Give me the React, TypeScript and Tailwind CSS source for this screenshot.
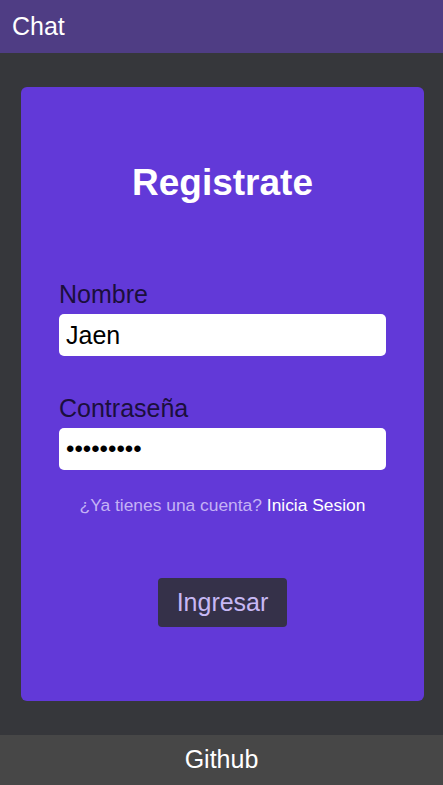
import { FC } from "react";

const App: FC = () => {
	return (
		<div className="flex flex-col min-h-[785px] bg-[#36373b] font-['Liberation_Sans',Arial,sans-serif]">
			<header className="h-[53px] bg-[#4f3d84] flex items-center px-3">
				<h2 className="text-white text-[25px] leading-none">Chat</h2>
			</header>

			<main className="flex-1 pl-[21px] pr-[19px] pt-[34px] pb-[34px]">
				<form
					className="bg-[#6239d8] rounded-md px-[38px] pt-[75px] pb-[74px] flex flex-col"
					onSubmit={(e) => e.preventDefault()}
				>
					<h1 className="text-white text-[37px] font-bold text-center leading-[42px]">
						Registrate
					</h1>

					<label className="mt-[76px] text-[25px] leading-[28px] text-[#1b0f3c]">
						Nombre
					</label>
					<input
						type="text"
						defaultValue="Jaen"
						className="mt-[6px] h-[42px] w-full rounded-[5px] bg-white px-[7px] text-[25px] text-black outline-none"
					/>

					<label className="mt-[38px] text-[25px] leading-[28px] text-[#1b0f3c]">
						Contraseña
					</label>
					<input
						type="password"
						defaultValue="123456789"
						className="mt-[6px] h-[42px] w-full rounded-[5px] bg-white px-[7px] text-[24px] text-black outline-none"
					/>

					<p className="mt-[26px] text-center text-[17.4px] leading-[18px] text-[#c4b2f5]">
						¿Ya tienes una cuenta?{" "}
						<a className="text-white cursor-pointer">Inicia Sesion</a>
					</p>

					<div className="mt-[64px] flex justify-center">
						<button
							type="submit"
							className="h-[49px] px-[19px] rounded-[4px] bg-[#353149] text-[#c7b8f4] text-[25px]"
						>
							Ingresar
						</button>
					</div>
				</form>
			</main>

			<footer className="h-[50px] bg-[#474747] flex items-center justify-center">
				<a className="text-white text-[25px]">Github</a>
			</footer>
		</div>
	);
};

export default App;
